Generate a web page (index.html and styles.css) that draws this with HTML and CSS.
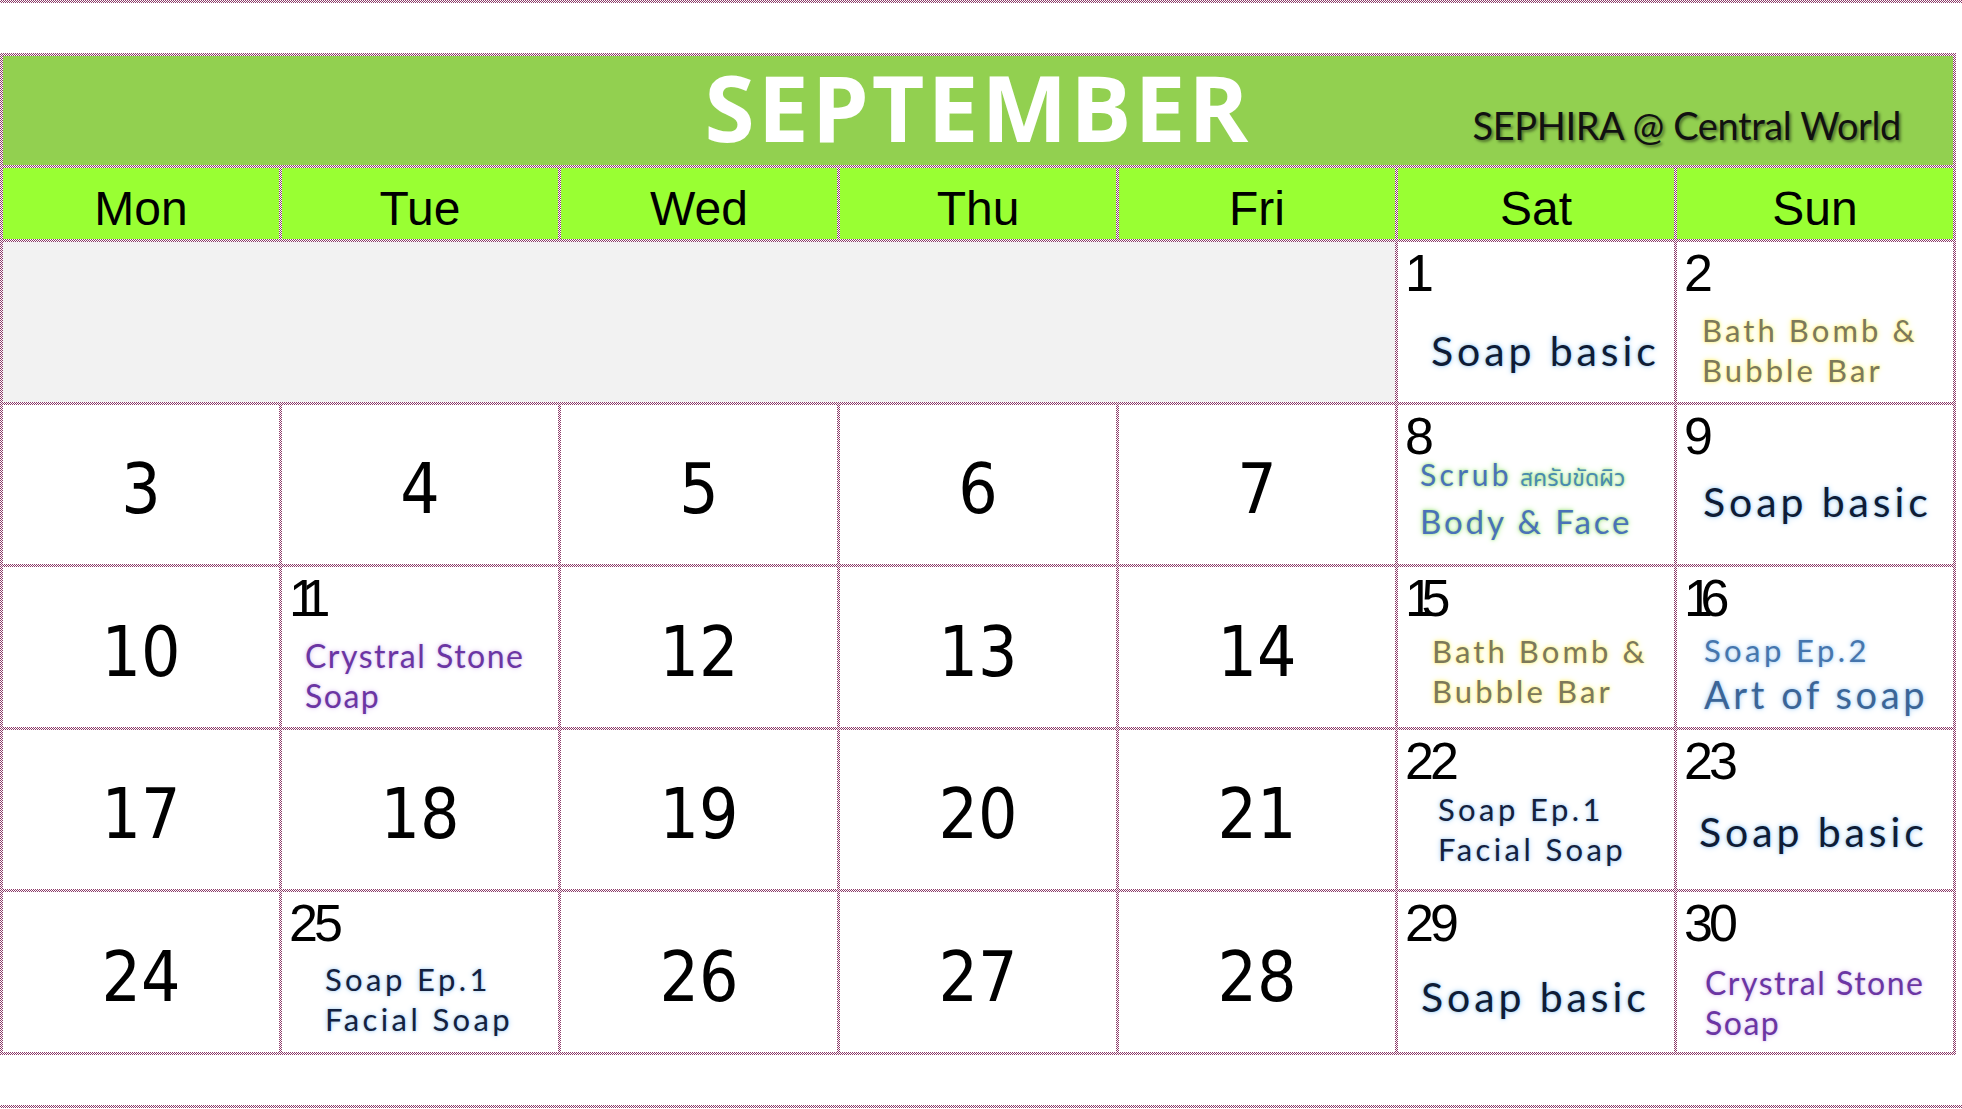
FILE: index.html
```html
<!DOCTYPE html>
<html lang="en">
<head>
<meta charset="utf-8">
<title>September</title>
<link rel="stylesheet" href="styles.css">
</head>
<body>
<div class="rule"></div>
<div class="cal">
  <div class="title">
    <div></div>
    <div class="month">SEPTEMBER</div>
    <div class="venue">SEPHIRA @ Central World</div>
  </div>
  <div class="dow">Mon</div>
  <div class="dow">Tue</div>
  <div class="dow">Wed</div>
  <div class="dow">Thu</div>
  <div class="dow">Fri</div>
  <div class="dow">Sat</div>
  <div class="dow">Sun</div>

  <div class="blank"></div>
  <div class="cell"><div class="dnum">1</div><div class="ev basic p-sat1">Soap basic</div></div>
  <div class="cell"><div class="dnum">2</div><div class="ev bath p-sun2">Bath Bomb &amp;<br>Bubble Bar</div></div>

  <div class="big">3</div>
  <div class="big">4</div>
  <div class="big">5</div>
  <div class="big">6</div>
  <div class="big">7</div>
  <div class="cell"><div class="dnum">8</div><div class="ev scrub p-sat8"><span class="scrub-en">Scrub</span> <span class="thai">สครับขัดผิว</span><br><span class="body">Body &amp; Face</span></div></div>
  <div class="cell"><div class="dnum">9</div><div class="ev basic p-sun9">Soap basic</div></div>

  <div class="big">10</div>
  <div class="cell"><div class="dnum tight">11</div><div class="ev crystal p-tue11">Crystral Stone<br>Soap</div></div>
  <div class="big">12</div>
  <div class="big">13</div>
  <div class="big">14</div>
  <div class="cell"><div class="dnum tight">15</div><div class="ev bath p-sat15">Bath Bomb &amp;<br>Bubble Bar</div></div>
  <div class="cell"><div class="dnum tight">16</div><div class="ev ep2 p-sun16">Soap Ep.2<br><span class="art">Art of soap</span></div></div>

  <div class="big">17</div>
  <div class="big">18</div>
  <div class="big">19</div>
  <div class="big">20</div>
  <div class="big">21</div>
  <div class="cell"><div class="dnum">22</div><div class="ev ep p-sat22">Soap Ep.1<br>Facial Soap</div></div>
  <div class="cell"><div class="dnum">23</div><div class="ev basic p-sun23">Soap basic</div></div>

  <div class="big">24</div>
  <div class="cell"><div class="dnum">25</div><div class="ev ep p-tue25">Soap Ep.1<br>Facial Soap</div></div>
  <div class="big">26</div>
  <div class="big">27</div>
  <div class="big">28</div>
  <div class="cell"><div class="dnum">29</div><div class="ev basic p-sat29">Soap basic</div></div>
  <div class="cell"><div class="dnum">30</div><div class="ev crystal p-sun30">Crystral Stone<br>Soap</div></div>
</div>
<div class="rule rule-bottom"></div>
</body>
</html>
```

FILE: styles.css
```css
html, body {
  margin: 0;
  padding: 0;
  background: #ffffff;
}
body {
  width: 1962px;
  height: 1109px;
  overflow: hidden;
}
.rule {
  height: 3px;
  width: 1962px;
  background: repeating-conic-gradient(#8c3b69 0 25%, #ffffff 0 50%) 0 0 / 2px 2px;
}
.rule-bottom {
  margin-top: 50px;
}
.cal {
  margin-top: 50px;
  display: grid;
  grid-template-columns: repeat(7, 276px);
  grid-template-rows: 109px 71px 160px 159px 160px 159px 160px;
  gap: 3px;
  padding: 3px;
  width: max-content;
  background: repeating-conic-gradient(#8c3b69 0 25%, #ffffff 0 50%) 0 0 / 2px 2px;
}
.title {
  grid-column: 1 / -1;
  background: #92d050;
  display: grid;
  grid-template-columns: 1fr auto 1fr;
  align-items: center;
}
.month {
  font-family: "Open Sans", "Noto Sans", sans-serif;
  font-weight: 700;
  font-size: 91px;
  line-height: 1;
  letter-spacing: 3px;
  color: #ffffff;
  padding-bottom: 6px;
}
.venue {
  justify-self: end;
  align-self: end;
  font-family: Lato, "Noto Sans", sans-serif;
  font-size: 38px;
  line-height: 1;
  letter-spacing: -0.4px;
  color: #111111;
  margin-bottom: 21px;
  padding-right: 52px;
  text-shadow: 2px 2px 3px rgba(0, 0, 0, 0.45);
  white-space: nowrap;
}
.dow {
  background: #99ff33;
  font-family: "Liberation Sans", Arial, sans-serif;
  font-size: 48px;
  line-height: 1;
  color: #000000;
  text-align: center;
  padding-top: 17px;
}
.blank {
  grid-column: span 5;
  background: #f2f2f2;
}
.big {
  background: #ffffff;
  display: flex;
  justify-content: center;
  align-items: center;
  padding-top: 10px;
  font-family: "DejaVu Sans Condensed", "DejaVu Sans", sans-serif;
  font-stretch: condensed;
  font-size: 69px;
  line-height: 1;
  color: #000000;
}
.cell {
  background: #ffffff;
  display: flex;
  flex-direction: column;
  align-items: flex-start;
}
.dnum {
  font-family: "Liberation Sans", Arial, sans-serif;
  font-size: 52px;
  line-height: 52px;
  letter-spacing: -4px;
  color: #000000;
  padding: 5px 0 0 7px;
}
.dnum.tight {
  letter-spacing: -12.5px;
}
.ev {
  font-family: Lato, "Noto Sans", sans-serif;
  font-size: 31px;
  line-height: 40px;
  white-space: nowrap;
}
.basic {
  font-size: 41px;
  line-height: 50px;
  letter-spacing: 3.9px;
  color: #0e1c36;
  text-shadow: 0 0 3px #9fcbf2, 0 0 6px #b9dbf7;
}
.bath {
  letter-spacing: 3.1px;
  color: #7c795b;
  text-shadow: 0 0 3px #fff06a, 0 0 6px #fff59a;
}
.scrub {
  color: #4a72b8;
  text-shadow: 0 0 3px #9be27c, 0 0 6px #b8ec9e;
}
.scrub-en {
  font-size: 30px;
  letter-spacing: 3.4px;
}
.thai {
  font-family: "Noto Sans Thai", "Noto Sans", "DejaVu Sans", sans-serif;
  font-size: 23px;
  color: #4a8cb0;
}
.body {
  font-size: 33px;
  letter-spacing: 2.9px;
  line-height: 45px;
}
.crystal {
  font-size: 32px;
  letter-spacing: 1.5px;
  color: #6b35a3;
  text-shadow: 0 0 3px #d9c4ee, 0 0 6px #e6d7f4;
}
.ep {
  letter-spacing: 3.4px;
  color: #13213f;
  text-shadow: 0 0 3px #a9cff2, 0 0 6px #c2def7;
}
.ep2 {
  letter-spacing: 3.4px;
  color: #4676ad;
  text-shadow: 0 0 3px #a9cff2, 0 0 6px #c2def7;
}
.art {
  font-size: 38px;
  line-height: 49px;
  letter-spacing: 3.6px;
  color: #3b6597;
}
.p-sat1 { margin: 27px 0 0 33px; }
.p-sun2 { margin: 11px 0 0 25px; }
.p-sat8 { margin: -8px 0 0 22px; }
.p-sun9 { margin: 15px 0 0 26px; }
.p-tue11 { margin: 12px 0 0 23px; }
.p-sat15 { margin: 7px 0 0 34px; }
.p-sun16 { margin: 6px 0 0 27px; }
.p-sat22 { margin: 2px 0 0 40px; }
.p-sun23 { margin: 20px 0 0 22px; }
.p-tue25 { margin: 10px 0 0 43px; }
.p-sat29 { margin: 23px 0 0 23px; }
.p-sun30 { margin: 14px 0 0 28px; }
```
